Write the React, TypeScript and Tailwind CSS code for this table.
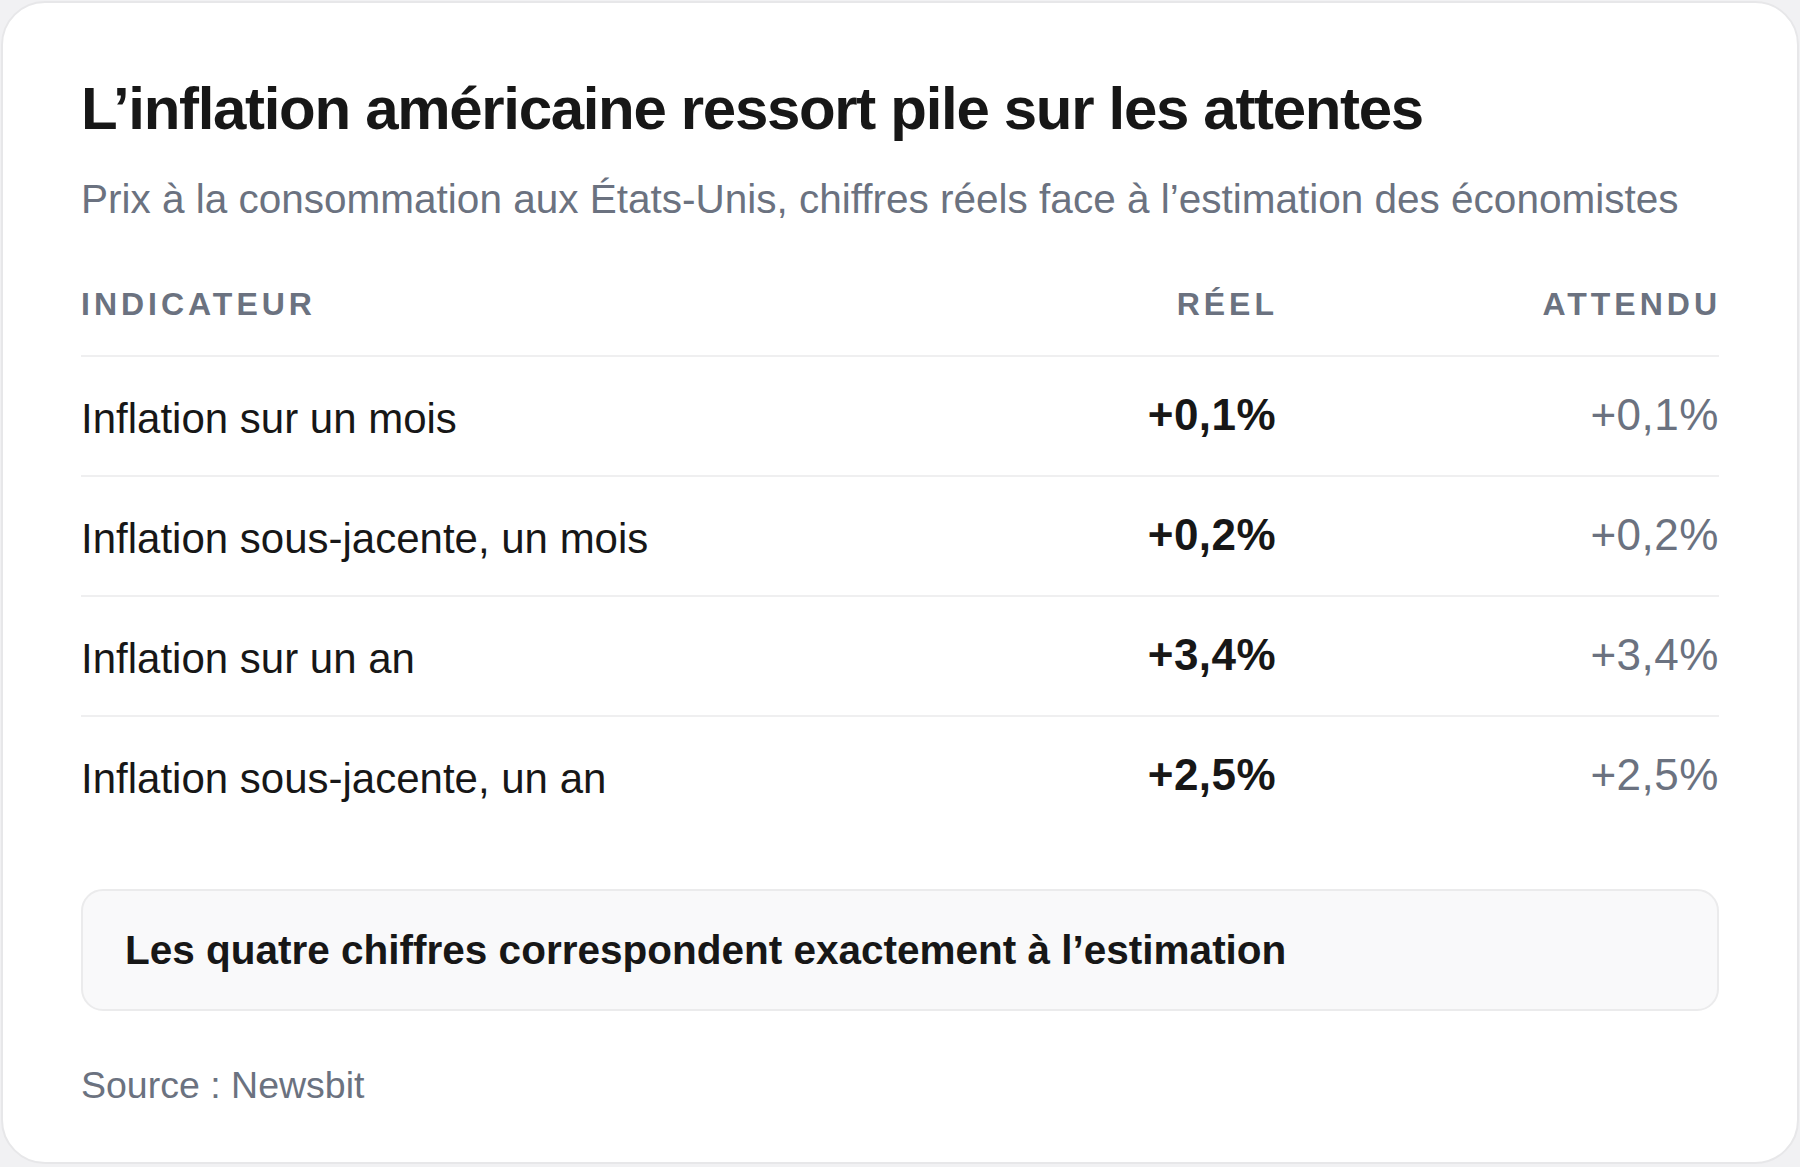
import React from "react";

// lignes du tableau : indicateur, valeur réelle, estimation
const rows = [
  { label: "Inflation sur un mois", actual: "+0,1%", expected: "+0,1%" },
  { label: "Inflation sous-jacente, un mois", actual: "+0,2%", expected: "+0,2%" },
  { label: "Inflation sur un an", actual: "+3,4%", expected: "+3,4%" },
  { label: "Inflation sous-jacente, un an", actual: "+2,5%", expected: "+2,5%" },
];

export default function App() {
  return (
    <main
      className="min-h-screen bg-[#f1f1f3] p-[1px]"
      style={{ fontFamily: '"Liberation Sans", Arial, sans-serif' }}
    >
      <div className="h-[1163px] w-[1798px] rounded-[44px] border-2 border-[#e7e7e9] bg-white px-[78px] pt-[70px]">
        {/* titre + sous-titre */}
        <h1 className="text-[60px] leading-[72px] font-bold tracking-[-0.022em] text-[#171717]">
          L’inflation américaine ressort pile sur les attentes
        </h1>
        <p className="mt-[26px] text-[40.5px] leading-[56px] text-[#6b7280]">
          Prix à la consommation aux États-Unis, chiffres réels face à l’estimation des économistes
        </p>

        {/* tableau */}
        <div className="mt-[57px]">
          <div className="grid grid-cols-[1fr_240px_443px] border-b-2 border-[#efeff0] pb-[31px] text-[32px] leading-[40px] font-bold uppercase tracking-[0.125em] text-[#6b7280]">
            <span>Indicateur</span>
            <span className="text-right -mr-[2px]">Réel</span>
            <span className="text-right -mr-[2px]">Attendu</span>
          </div>

          {rows.map((row, i) => (
            <div
              key={row.label}
              className={`grid grid-cols-[1fr_240px_443px] items-start pt-[30px] pb-[25px] ${
                i > 0 ? "border-t-2 border-[#efeff0]" : ""
              }`}
            >
              <span className="text-[42px] leading-[63px] text-[#171717]">
                {row.label}
              </span>
              <span className="text-right text-[44px] leading-[56px] font-bold tracking-[0.01em] text-[#171717]">
                {row.actual}
              </span>
              <span className="text-right text-[44px] leading-[56px] tracking-[0.012em] text-[#6b7280]">
                {row.expected}
              </span>
            </div>
          ))}
        </div>

        {/* encadré de conclusion */}
        <div className="mt-[54px] rounded-[22px] border-2 border-[#ebebec] bg-[#f9f9fa] px-[42px] py-[33px]">
          <p className="text-[40.5px] leading-[52px] font-bold text-[#171717]">
            Les quatre chiffres correspondent exactement à l’estimation
          </p>
        </div>

        <p className="mt-[50px] text-[37.5px] leading-[48px] text-[#6b7280]">
          Source : Newsbit
        </p>
      </div>
    </main>
  );
}
